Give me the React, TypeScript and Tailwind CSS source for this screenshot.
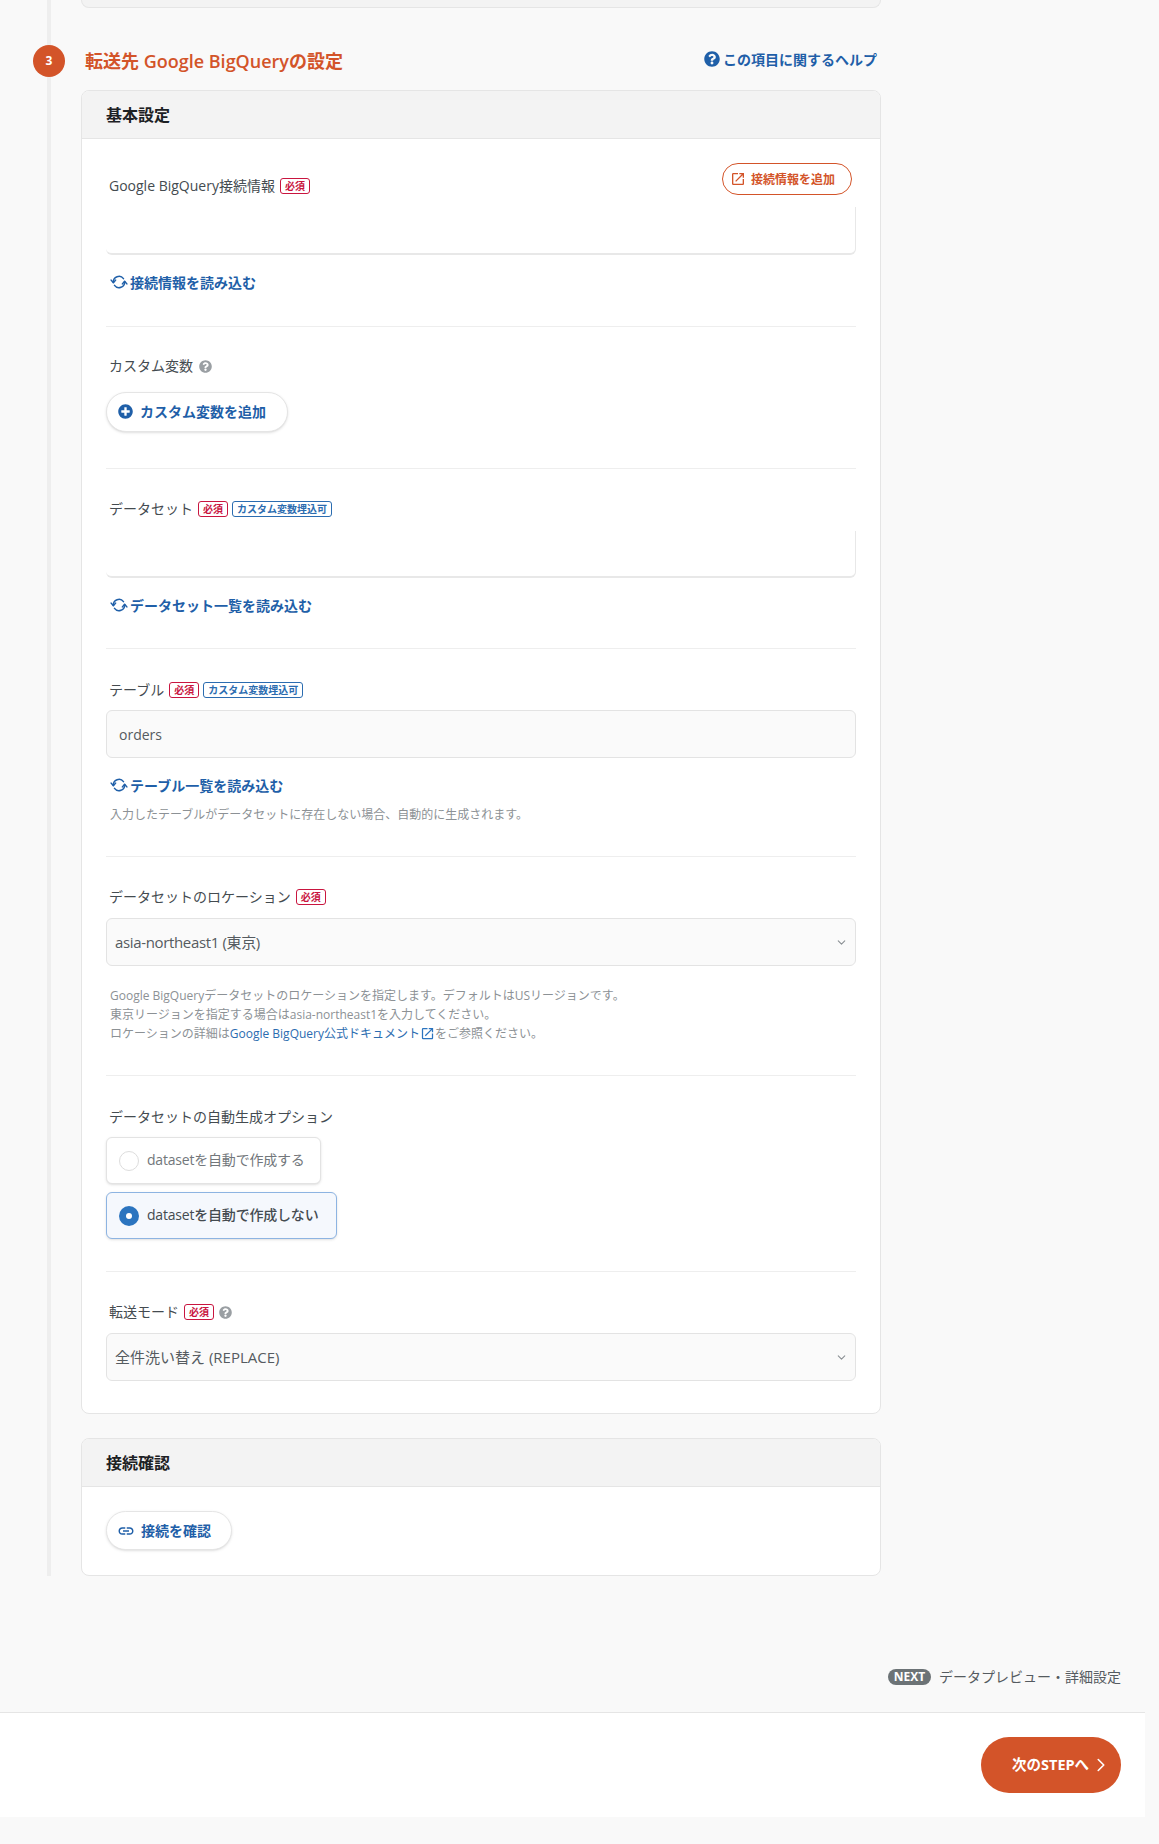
import React from 'react';
import { ChevronDown, ChevronRight } from 'lucide-react';
import { FaQuestionCircle, FaPlusCircle } from 'react-icons/fa';
import { MdLink, MdOpenInNew } from 'react-icons/md';

const font = "font-['Open_Sans','Noto_Sans_CJK_JP',sans-serif]";

const Required = () => (
    <span className="inline-flex items-center justify-center h-[16px] w-[30px] shrink-0 rounded-[3px] border border-[#c9153f] text-[#c9153f] text-[10px] font-bold">必須</span>
);

const CustomOk = () => (
    <span className="inline-flex items-center justify-center h-[16px] w-[100px] shrink-0 rounded-[3px] border border-[#2b6cb0] text-[#2b6cb0] text-[10px] font-bold whitespace-nowrap">カスタム変数埋込可</span>
);

const Help = () => <FaQuestionCircle size={13} className="text-[#9a9fa3] ml-[1px]" />;

const Divider = () => <div className="border-t border-[#eeeeee]" />;

const Label = ({ text, children }: { text: string; children?: React.ReactNode }) => (
    <div className="flex items-center gap-[4px] h-[20px] pl-[3px] text-[14px] text-[#444b50]">
        <span className="-mt-[2px] mr-[1px]">{text}</span>
        {children}
    </div>
);

const SyncIcon = () => (
    <svg width="18" height="18" viewBox="0 0 24 24" fill="none" stroke="currentColor" strokeWidth="2" strokeLinecap="round" strokeLinejoin="round" className="shrink-0">
        <path d="M4.5 12.5A7.5 7.5 0 0 1 18 7.5" />
        <path d="M1.5 9.5l3 3.5 3-3.5" />
        <path d="M19.5 11.5A7.5 7.5 0 0 1 6 16.5" />
        <path d="M16.5 14.5l3-3.5 3 3.5" />
    </svg>
);

const ReloadLink = ({ text }: { text: string }) => (
    <div className="flex items-center gap-[2px] h-[20px] pl-[4px] text-[14px] font-semibold text-[#1f5fa8]">
        <SyncIcon />
        <span>{text}</span>
    </div>
);

const Select = ({ text, className }: { text: string; className?: string }) => (
    <div className="flex items-center justify-between h-[48px] rounded-[6px] bg-[#fafafa] border border-[#e3e3e3] pl-[8px] pr-[7px] text-[15px] text-[#555b60]">
        <span className={className}>{text}</span>
        <ChevronDown size={13} className="text-[#8b9094]" />
    </div>
);

const CardHeader = ({ text }: { text: string }) => (
    <div className="flex items-center h-[48px] px-[24px] bg-[#f3f3f3] border-b border-[#e5e5e5] text-[16px] font-bold text-[#1d2124]">{text}</div>
);

export default function App() {
    return (
        <div className={`${font} w-full h-[1844px] bg-[#f9f9f9]`}>
            <div className="w-[1145px]">
                <div className="ml-[47px] border-l-4 border-[#eeeeee] pl-[30px]">
                    <div className="w-[800px] h-[8px] bg-[#f3f3f3] border border-t-0 border-[#e5e5e5] rounded-b-[8px]" />

                    {/* STEP HEADER */}
                    <div className="flex items-start w-[800px] mt-[37px] h-[45px]">
                        <div className="flex items-center justify-center w-[32px] h-[32px] -ml-[48px] shrink-0 rounded-full bg-[#d35429] text-white text-[12px] font-bold">3</div>
                        <div className="ml-[20px] h-[32px] flex items-center text-[18px] font-semibold text-[#d35429]">転送先 Google BigQueryの設定</div>
                        <div className="ml-auto mr-[4px] h-[28px] flex items-center gap-[3px] text-[14px] font-semibold text-[#1f5fa8]">
                            <FaQuestionCircle size={16} />
                            この項目に関するヘルプ
                        </div>
                    </div>

                    {/* BASIC SETTINGS */}
                    <div className="w-[800px] h-[1324px] bg-white border border-[#e5e5e5] rounded-[8px] overflow-hidden">
                        <CardHeader text="基本設定" />
                        <div className="px-[24px]">
                            <div className="flex items-start justify-between pt-[24px] pr-[4px] h-[68px]">
                                <div className="pt-[13px]">
                                    <Label text="Google BigQuery接続情報"><Required /></Label>
                                </div>
                                <div className="flex items-center gap-[5px] w-[130px] h-[32px] pl-[7px] rounded-full bg-white border border-[#d35429] text-[#d35429] text-[12px] font-semibold">
                                    <MdOpenInNew size={16} />
                                    <span className="mt-[2px]">接続情報を追加</span>
                                </div>
                            </div>
                            <div className="h-[48px] rounded-b-[6px] bg-white border-b-2 border-r border-[#e8e8e8]" />
                            <div className="mt-[17px]"><ReloadLink text="接続情報を読み込む" /></div>
                            <div className="mt-[34px]"><Divider /></div>

                            <div className="mt-[29px]">
                                <Label text="カスタム変数"><Help /></Label>
                            </div>
                            <div className="flex items-center gap-[7px] mt-[16px] w-[182px] h-[40px] pl-[11px] pb-[2px] rounded-full bg-white border border-[#e5e5e5] shadow-sm text-[14px] font-semibold text-[#1f5fa8]">
                                <FaPlusCircle size={15} />
                                カスタム変数を追加
                            </div>
                            <div className="mt-[36px]"><Divider /></div>

                            <div className="mt-[30px]">
                                <Label text="データセット"><Required /><CustomOk /></Label>
                            </div>
                            <div className="mt-[12px] h-[47px] rounded-b-[6px] bg-white border-b-2 border-r border-[#e8e8e8]" />
                            <div className="mt-[17px]"><ReloadLink text="データセット一覧を読み込む" /></div>
                            <div className="mt-[33px]"><Divider /></div>

                            <div className="mt-[31px]">
                                <Label text="テーブル"><Required /><CustomOk /></Label>
                            </div>
                            <div className="flex items-center mt-[10px] h-[48px] pl-[12px] rounded-[6px] bg-[#fafafa] border border-[#e3e3e3] text-[14px] text-[#555b60]">orders</div>
                            <div className="mt-[17px]"><ReloadLink text="テーブル一覧を読み込む" /></div>
                            <div className="mt-[10px] pl-[4px] h-[20px] text-[12px] leading-[20px] text-[#8c9195]">入力したテーブルがデータセットに存在しない場合、自動的に生成されます。</div>
                            <div className="mt-[31px]"><Divider /></div>

                            <div className="mt-[30px]">
                                <Label text="データセットのロケーション"><Required /></Label>
                            </div>
                            <div className="mt-[11px]"><Select text="asia-northeast1 (東京)" className="tracking-[-0.35px]" /></div>
                            <div className="mt-[20px] pl-[4px] text-[12px] leading-[19px] text-[#8c9195]">
                                <p>Google BigQueryデータセットのロケーションを指定します。デフォルトはUSリージョンです。</p>
                                <p>東京リージョンを指定する場合はasia-northeast1を入力してください。</p>
                                <p className="flex items-center">
                                    ロケーションの詳細は
                                    <span className="text-[#2b6cb0]">Google BigQuery公式ドキュメント</span>
                                    <MdOpenInNew size={15} className="text-[#2b74bf]" />
                                    をご参照ください。
                                </p>
                            </div>
                            <div className="mt-[32px]"><Divider /></div>

                            <div className="mt-[31px]">
                                <Label text="データセットの自動生成オプション" />
                            </div>
                            <div className="flex flex-col items-start gap-[8px] mt-[10px]">
                                <div className="flex items-center gap-[8px] w-[215px] h-[47px] pl-[12px] pb-[2px] rounded-[6px] bg-white border border-[#e3e3e3] shadow-sm text-[14px] tracking-[-0.2px] text-[#72777b]">
                                    <span className="w-[20px] h-[20px] mt-[2px] rounded-full border border-[#dddddd] bg-white" />
                                    datasetを自動で作成する
                                </div>
                                <div className="flex items-center gap-[8px] w-[231px] h-[47px] pl-[12px] pb-[2px] rounded-[6px] bg-[#f5f8fd] border border-[#8db4e2] shadow-sm text-[14px] tracking-[-0.2px] font-medium text-[#444b50]">
                                    <span className="flex items-center justify-center w-[20px] h-[20px] mt-[2px] rounded-full bg-[#2b74bf]">
                                        <span className="w-[6px] h-[6px] rounded-full bg-white" />
                                    </span>
                                    datasetを自動で作成しない
                                </div>
                            </div>
                            <div className="mt-[32px]"><Divider /></div>

                            <div className="mt-[30px]">
                                <Label text="転送モード"><Required /><Help /></Label>
                            </div>
                            <div className="mt-[11px]"><Select text="全件洗い替え (REPLACE)" /></div>
                        </div>
                    </div>

                    {/* CONNECTION CHECK */}
                    <div className="w-[800px] h-[138px] mt-[24px] bg-white border border-[#e5e5e5] rounded-[8px] overflow-hidden">
                        <CardHeader text="接続確認" />
                        <div className="px-[24px] pt-[24px]">
                            <div className="flex items-center gap-[6px] w-[126px] h-[39px] pl-[10px] rounded-full bg-white border border-[#e5e5e5] shadow-sm text-[14px] font-semibold text-[#1f5fa8]">
                                <MdLink size={18} />
                                接続を確認
                            </div>
                        </div>
                    </div>
                </div>

                {/* NEXT */}
                <div className="flex items-center justify-end gap-[8px] pr-[24px] mt-[93px] h-[16px] text-[14px] text-[#555b60]">
                    <span className="flex items-center justify-center w-[43px] h-[16px] rounded-full bg-[#6c7376] text-white text-[12px] font-bold">NEXT</span>
                    <span className="-mt-[2px]">データプレビュー・詳細設定</span>
                </div>

                {/* FOOTER */}
                <div className="flex items-center justify-end h-[105px] mt-[27px] pr-[24px] bg-white border-t border-[#e5e5e5]">
                    <div className="flex items-center gap-[1px] w-[140px] h-[56px] pl-[31px] rounded-full bg-[#d35429] text-white text-[14.5px] font-bold">
                        次のSTEPへ
                        <ChevronRight size={22} strokeWidth={1.75} />
                    </div>
                </div>
            </div>
        </div>
    );
}
